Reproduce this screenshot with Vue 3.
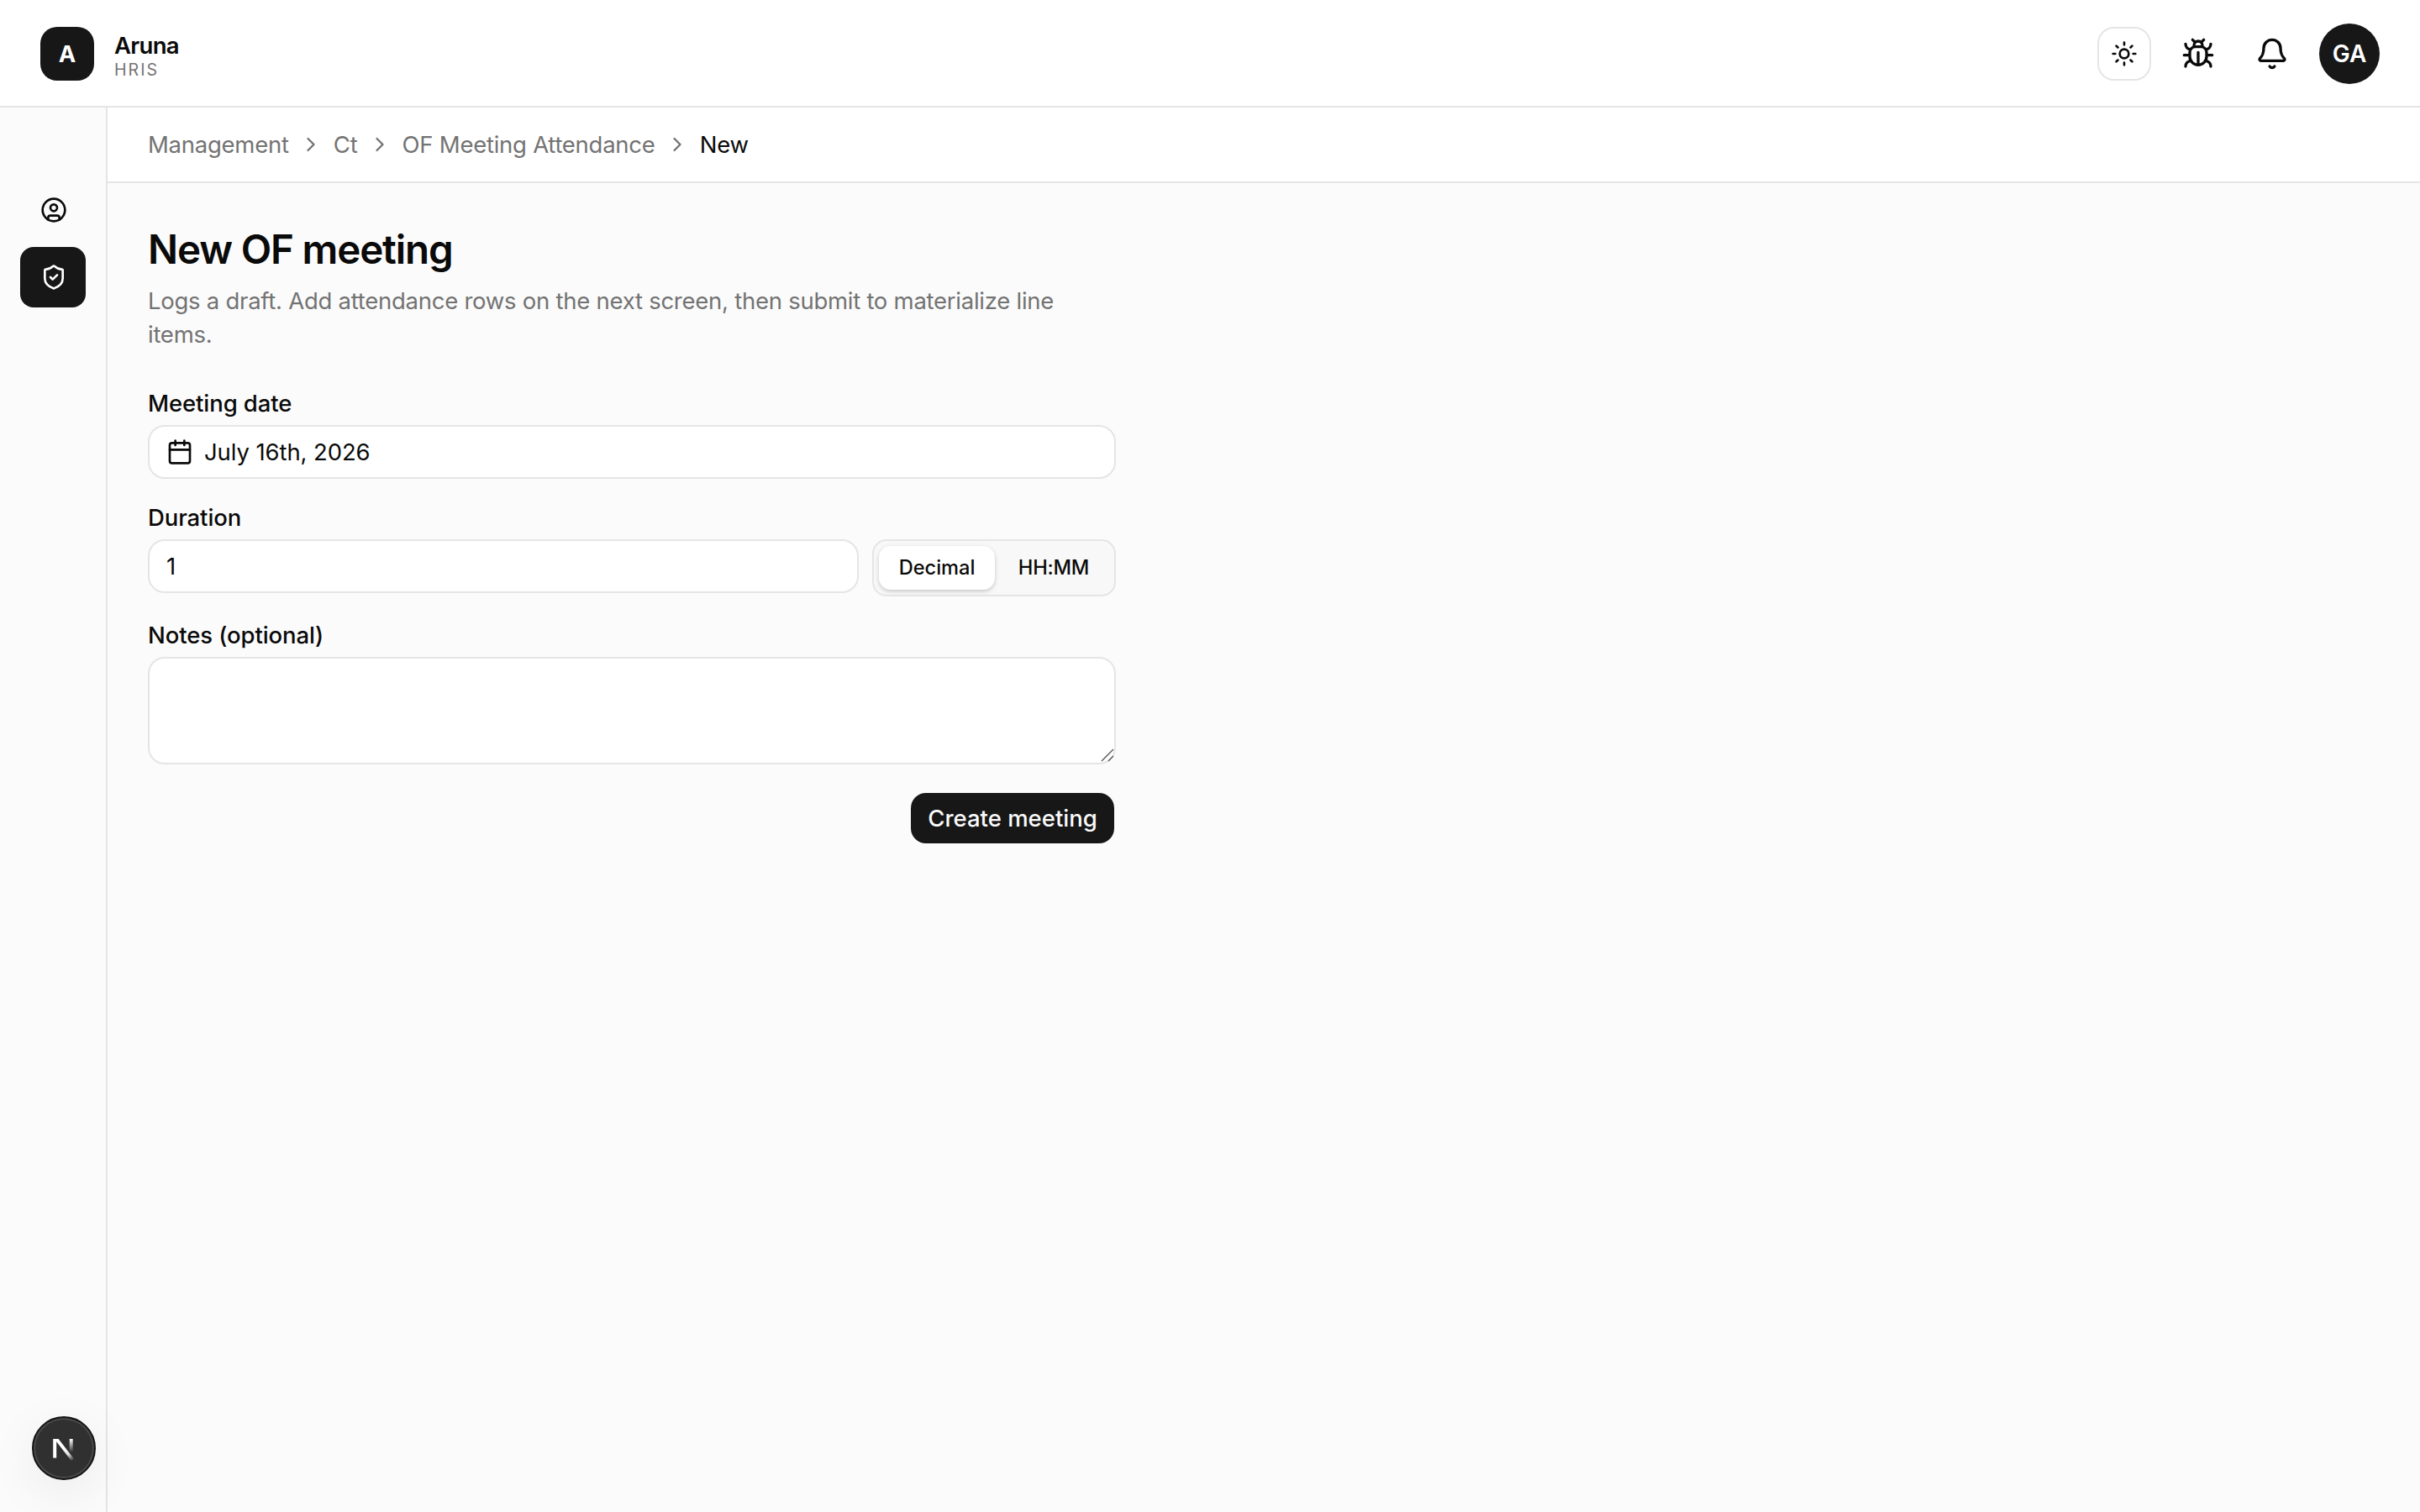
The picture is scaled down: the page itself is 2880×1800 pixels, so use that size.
<template>
  <div class="app">
    <header class="topbar">
      <div class="brand">
        <div class="brand-mark">A</div>
        <div class="brand-text">
          <span class="brand-name">Aruna</span>
          <span class="brand-sub">HRIS</span>
        </div>
      </div>
      <div class="actions">
        <button class="theme-toggle" type="button">
          <svg class="icon icon-md" viewBox="0 0 24 24">
            <circle cx="12" cy="12" r="4" />
            <path d="M12 2v2M12 20v2M4.93 4.93l1.41 1.41M17.66 17.66l1.41 1.41M2 12h2M20 12h2M6.34 17.66l-1.41 1.41M19.07 4.93l-1.41 1.41" />
          </svg>
        </button>
        <button class="icon-button" type="button">
          <svg class="icon icon-lg" viewBox="0 0 24 24">
            <path d="M12 20v-9M14 7a4 4 0 0 1 4 4v3a6 6 0 0 1-12 0v-3a4 4 0 0 1 4-4zM14.12 3.88 16 2M21 21a4 4 0 0 0-3.81-4M21 5a4 4 0 0 1-3.55 3.97M22 13h-4M3 21a4 4 0 0 1 3.81-4M3 5a4 4 0 0 0 3.55 3.97M6 13H2M8 2l1.88 1.88M9 7.13V6a3 3 0 1 1 6 0v1.13" />
          </svg>
        </button>
        <button class="icon-button" type="button">
          <svg class="icon icon-lg" viewBox="0 0 24 24">
            <path d="M10.268 21a2 2 0 0 0 3.464 0M3.262 15.326A1 1 0 0 0 4 17h16a1 1 0 0 0 .74-1.673C19.41 13.956 18 12.499 18 8A6 6 0 0 0 6 8c0 4.499-1.411 5.956-2.738 7.326" />
          </svg>
        </button>
        <div class="avatar">GA</div>
      </div>
    </header>

    <div class="body">
      <aside class="sidebar">
        <a class="nav-item">
          <svg class="icon icon-md" viewBox="0 0 24 24">
            <circle cx="12" cy="12" r="10" />
            <circle cx="12" cy="10" r="3" />
            <path d="M7 20.662V19a2 2 0 0 1 2-2h6a2 2 0 0 1 2 2v1.662" />
          </svg>
        </a>
        <a class="nav-item active">
          <svg class="icon icon-md" viewBox="0 0 24 24">
            <path d="M20 13c0 5-3.5 7.5-7.66 8.95a1 1 0 0 1-.67-.01C7.5 20.5 4 18 4 13V6a1 1 0 0 1 1-1c2 0 4.5-1.2 6.24-2.72a1.17 1.17 0 0 1 1.52 0C14.51 3.81 17 5 19 5a1 1 0 0 1 1 1z" />
            <path d="m9 12 2 2 4-4" />
          </svg>
        </a>
      </aside>

      <main class="main">
        <nav class="breadcrumb">
          <template v-for="(crumb, i) in crumbs" :key="crumb">
            <svg v-if="i > 0" class="icon chevron" viewBox="0 0 24 24"><path d="m9 18 6-6-6-6" /></svg>
            <span :class="{ current: i === crumbs.length - 1 }">{{ crumb }}</span>
          </template>
        </nav>

        <section class="content">
          <h1>New OF meeting</h1>
          <p class="description">Logs a draft. Add attendance rows on the next screen, then submit to materialize line items.</p>

          <form class="form" @submit.prevent>
            <div class="field">
              <label>Meeting date</label>
              <button class="control date" type="button">
                <svg class="icon icon-md" viewBox="0 0 24 24">
                  <path d="M8 2v4M16 2v4M3 10h18" />
                  <rect width="18" height="18" x="3" y="4" rx="2" />
                </svg>
                <span>July 16th, 2026</span>
              </button>
            </div>

            <div class="field">
              <label>Duration</label>
              <div class="duration">
                <input v-model="duration" class="control" type="text" />
                <div class="toggle">
                  <button
                    v-for="m in modes"
                    :key="m"
                    type="button"
                    :class="{ selected: m === mode }"
                    @click="mode = m"
                  >{{ m }}</button>
                </div>
              </div>
            </div>

            <div class="field">
              <label>Notes (optional)</label>
              <div class="notes">
                <textarea v-model="notes" class="control"></textarea>
                <svg class="grip" viewBox="0 0 16 16"><path d="M1 15 15 1M9 15l6-6" /></svg>
              </div>
            </div>

            <button class="submit" type="submit">Create meeting</button>
          </form>
        </section>
      </main>
    </div>

    <!-- dev tools badge -->
    <div class="dev-badge">
      <svg viewBox="0 0 40 40" fill="none">
        <defs>
          <linearGradient id="diag" x1="20" y1="20" x2="31" y2="34.500" gradientUnits="userSpaceOnUse">
            <stop stop-color="#fff" />
            <stop offset="0.5" stop-color="#fff" stop-opacity="0.85" />
            <stop offset="1" stop-color="#fff" stop-opacity="0" />
          </linearGradient>
          <linearGradient id="stem" x1="29" y1="9" x2="29" y2="25" gradientUnits="userSpaceOnUse">
            <stop stop-color="#fff" />
            <stop offset="1" stop-color="#fff" stop-opacity="0" />
          </linearGradient>
        </defs>
        <path d="M9.200 9h4.400L33 34l-3 2.400L11 12z" fill="url(#diag)" />
        <path d="M9.200 31.600V9" stroke="#fff" stroke-width="4" />
        <path d="M28.700 9v16" stroke="url(#stem)" stroke-width="4" />
      </svg>
    </div>
  </div>
</template>

<script setup>
import { ref } from 'vue'

const crumbs = ['Management', 'Ct', 'OF Meeting Attendance', 'New']
const modes = ['Decimal', 'HH:MM']

const mode = ref('Decimal')
const duration = ref('1')
const notes = ref('')
</script>

<style>
body {
  margin: 0;
  background: #fbfbfb;
}
</style>

<style scoped>
* {
  box-sizing: border-box;
}
.app {
  height: 1800px;
  display: flex;
  flex-direction: column;
  background: #fbfbfb;
  color: #0a0a0a;
  font-family: Inter, "Liberation Sans", sans-serif;
  font-size: 27.5px;
  line-height: 40px;
  letter-spacing: -0.26px;
}
button, input, textarea {
  font: inherit;
  letter-spacing: inherit;
  color: inherit;
  margin: 0;
}
.icon {
  flex: none;
  fill: none;
  stroke: currentColor;
  stroke-width: 2;
  stroke-linecap: round;
  stroke-linejoin: round;
}
.icon-md { width: 32px; height: 32px; }
.icon-lg { width: 40px; height: 40px; }

.topbar {
  flex: none;
  height: 128px;
  padding: 0 48px;
  display: flex;
  align-items: center;
  justify-content: space-between;
  background: #fff;
  border-bottom: 2px solid #e5e5e5;
}
.brand {
  display: flex;
  align-items: center;
  gap: 24px;
  padding-top: 2px;
}
.brand-mark {
  width: 64px;
  height: 64px;
  border-radius: 20px;
  background: #171717;
  color: #fff;
  font-weight: 700;
  display: flex;
  align-items: center;
  justify-content: center;
}
.brand-text {
  display: flex;
  flex-direction: column;
  padding-top: 4px;
}
.brand-name {
  font-weight: 600;
  line-height: 34px;
  letter-spacing: -0.7px;
}
.brand-sub {
  font-size: 19.6px;
  line-height: 24px;
  letter-spacing: 2px;
  color: #737373;
}
.actions {
  display: flex;
  align-items: center;
  gap: 24px;
  padding-top: 2px;
}
.theme-toggle, .icon-button {
  width: 64px;
  height: 64px;
  padding: 0;
  display: flex;
  align-items: center;
  justify-content: center;
  background: none;
  border: 2px solid transparent;
  border-radius: 20px;
}
.theme-toggle {
  border-color: #e5e5e5;
}
.avatar {
  width: 72px;
  height: 72px;
  border-radius: 50%;
  background: #171717;
  color: #fff;
  font-size: 28px;
  font-weight: 600;
  letter-spacing: 0;
  display: flex;
  align-items: center;
  justify-content: center;
}

.body {
  flex: 1;
  display: flex;
}
.sidebar {
  flex: none;
  width: 128px;
  padding: 86px 24px 0;
  border-right: 2px solid #e5e5e5;
  display: flex;
  flex-direction: column;
  gap: 8px;
}
.nav-item {
  height: 72px;
  padding-left: 24px;
  display: flex;
  align-items: center;
  border-radius: 16px;
}
.nav-item.active {
  background: #171717;
  color: #fff;
}
.main {
  flex: 1;
}
.breadcrumb {
  height: 90px;
  padding: 0 48px;
  display: flex;
  align-items: center;
  gap: 12.6px;
  background: #fff;
  border-bottom: 2px solid #e5e5e5;
  color: #737373;
}
.breadcrumb .current {
  color: #0a0a0a;
}
.chevron {
  width: 28px;
  height: 28px;
}

.content {
  width: 1248px;
  padding: 48px;
}
h1 {
  margin: 0;
  font-size: 47.5px;
  line-height: 62px;
  font-weight: 600;
  letter-spacing: -1.15px;
}
.description {
  margin: 10px 0 0;
  color: #737373;
}
.form {
  margin-top: 48px;
  display: flex;
  flex-direction: column;
  gap: 32px;
}
.field {
  display: flex;
  flex-direction: column;
  gap: 12px;
}
label {
  font-weight: 500;
  line-height: 28px;
  letter-spacing: -0.1px;
}
.control {
  width: 100%;
  height: 64px;
  padding: 0 20px;
  background: #fff;
  border: 2px solid #e5e5e5;
  border-radius: 20px;
  outline: none;
}
.date {
  display: flex;
  align-items: center;
  gap: 13px;
  letter-spacing: -0.1px;
}
.duration {
  display: flex;
  align-items: flex-start;
  gap: 16px;
}
.duration .control {
  flex: 1;
  min-width: 0;
}
.toggle {
  flex: none;
  width: 290px;
  height: 68px;
  padding: 6px;
  display: flex;
  gap: 4px;
  background: #f8f8f8;
  border: 2px solid #e5e5e5;
  border-radius: 17px;
}
.toggle button {
  flex: 1;
  height: 52px;
  padding: 0;
  background: none;
  border: 0;
  border-radius: 14px;
  font-size: 23.6px;
  font-weight: 500;
  line-height: 32px;
  letter-spacing: -0.2px;
}
.toggle .selected {
  flex: 0 0 138px;
  background: #fff;
  box-shadow: 0 2px 6px rgba(0, 0, 0, 0.1), 0 2px 4px rgba(0, 0, 0, 0.1);
  letter-spacing: 0;
}
.notes {
  position: relative;
  height: 128px;
}
.notes .control {
  display: block;
  height: 128px;
  padding: 16px 20px;
  resize: none;
}
.grip {
  position: absolute;
  right: 2px;
  bottom: 3px;
  width: 16px;
  height: 16px;
  fill: none;
  stroke: #555;
  stroke-width: 1.4;
}
.submit {
  align-self: flex-end;
  width: 246px;
  height: 64px;
  padding: 0;
  background: #171717;
  background-clip: padding-box;
  border: 2px solid transparent;
  border-radius: 20px;
  color: #fafafa;
  font-weight: 500;
  letter-spacing: 0;
}

.dev-badge {
  position: fixed;
  left: 38px;
  bottom: 38px;
  width: 76px;
  height: 76px;
  border-radius: 50%;
  display: flex;
  align-items: center;
  justify-content: center;
  background: #303030;
  border: 2px solid #141414;
  box-shadow: inset 0 0 0 2px #4a4a4a, 0 16px 60px rgba(0, 0, 0, 0.07);
}
.dev-badge svg {
  width: 40px;
  height: 40px;
}
</style>
